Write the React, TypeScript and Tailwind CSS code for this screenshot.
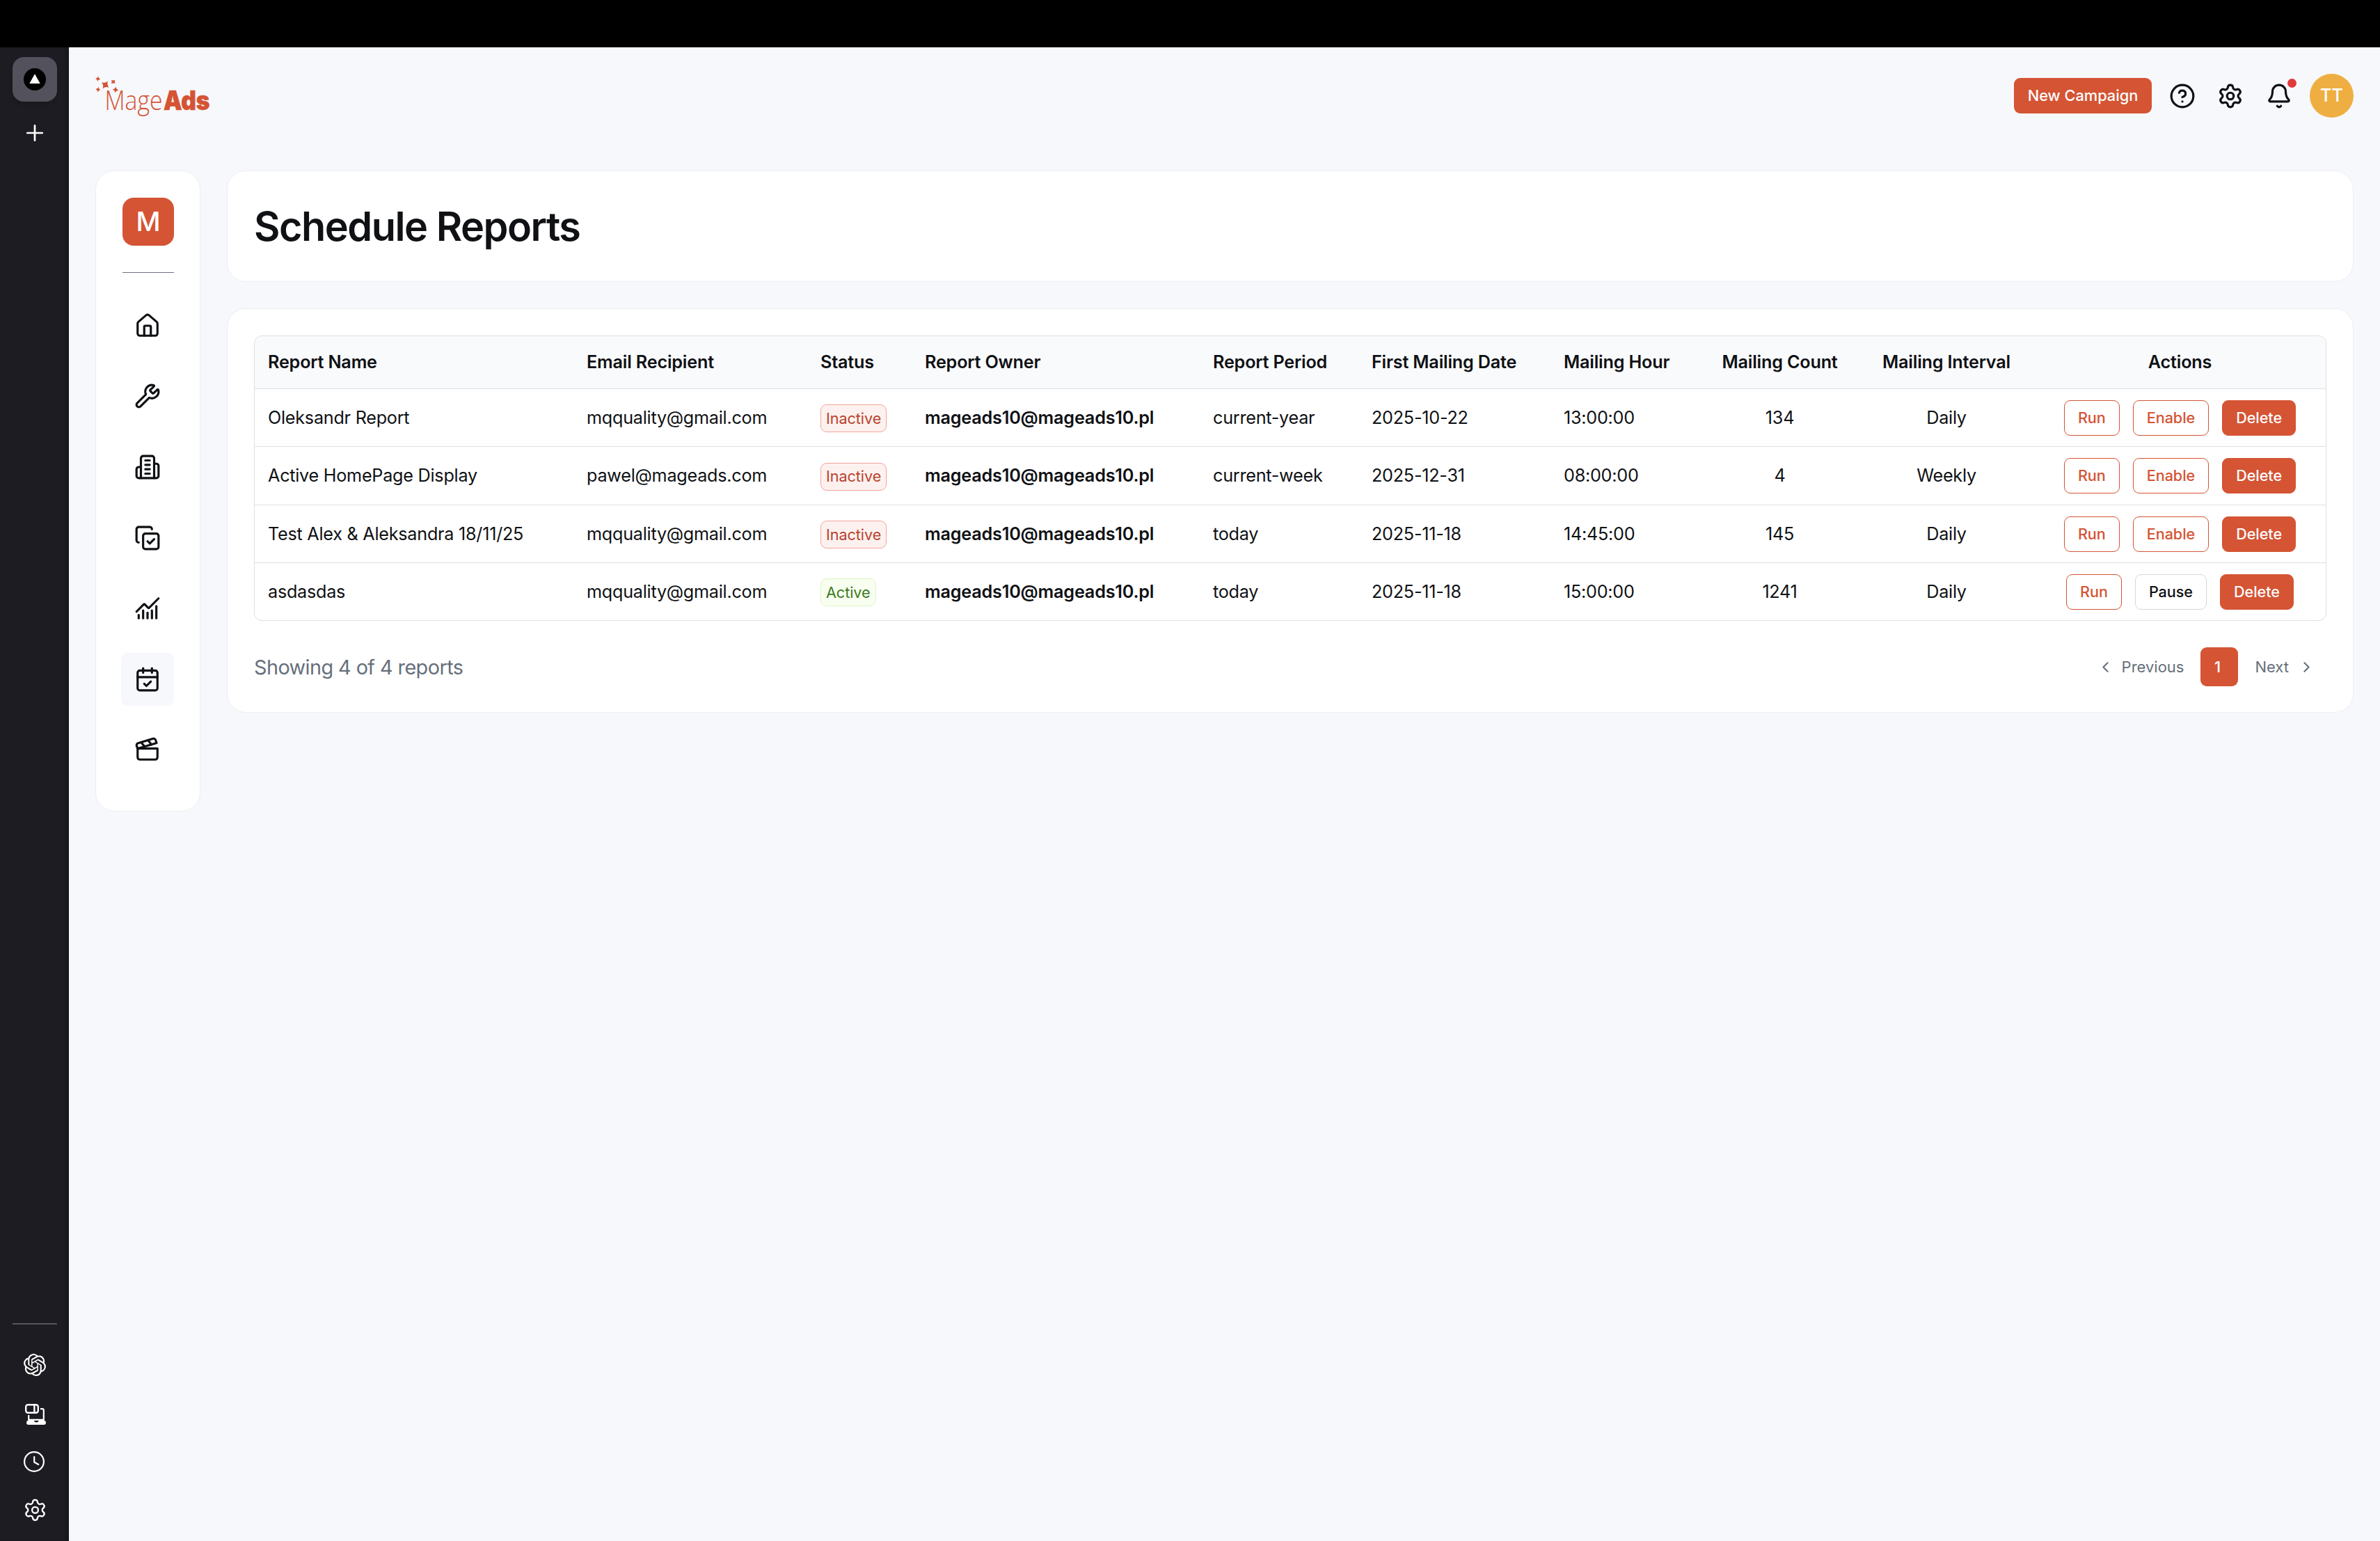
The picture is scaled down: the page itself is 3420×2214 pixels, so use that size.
import React from "react";
import {
  Bell,
  CalendarCheck,
  ChartNoAxesCombined,
  ChevronLeft,
  ChevronRight,
  CircleQuestionMark,
  Clapperboard,
  CopyCheck,
  House,
  Settings,
  Wrench,
} from "lucide-react";
import { SiOpenai } from "react-icons/si";

type Report = {
  name: string;
  email: string;
  active: boolean;
  owner: string;
  period: string;
  date: string;
  hour: string;
  count: string;
  interval: string;
  height: string;
};

const reports: Report[] = [
  { name: "Oleksandr Report", email: "mqquality@gmail.com", active: false, owner: "mageads10@mageads10.pl", period: "current-year", date: "2025-10-22", hour: "13:00:00", count: "134", interval: "Daily", height: "h-[83px] border-b" },
  { name: "Active HomePage Display", email: "pawel@mageads.com", active: false, owner: "mageads10@mageads10.pl", period: "current-week", date: "2025-12-31", hour: "08:00:00", count: "4", interval: "Weekly", height: "h-[84px] border-b" },
  { name: "Test Alex & Aleksandra 18/11/25", email: "mqquality@gmail.com", active: false, owner: "mageads10@mageads10.pl", period: "today", date: "2025-11-18", hour: "14:45:00", count: "145", interval: "Daily", height: "h-[83px] border-b" },
  { name: "asdasdas", email: "mqquality@gmail.com", active: true, owner: "mageads10@mageads10.pl", period: "today", date: "2025-11-18", hour: "15:00:00", count: "1241", interval: "Daily", height: "h-[82px]" },
];

const columns =
  "grid grid-cols-[458px_337px_149px_414px_228px_276px_226px_207px_272px_1fr] items-center";

function OfficeBuilding() {
  return (
    <svg width="38" height="38" viewBox="0 0 24 24" fill="none" stroke="currentColor" strokeWidth="2" strokeLinecap="round" strokeLinejoin="round">
      <path d="M6 22V4a2 2 0 0 1 2-2h8a2 2 0 0 1 2 2v18Z" />
      <path d="M6 12H4a2 2 0 0 0-2 2v6a2 2 0 0 0 2 2h2" />
      <path d="M18 9h2a2 2 0 0 1 2 2v9a2 2 0 0 1-2 2h-2" />
      <path d="M10 6h4M10 10h4M10 14h4M10 18h4" />
    </svg>
  );
}

function Star({ x, y, r, turn }: { x: number; y: number; r: number; turn: number }) {
  return (
    <path
      transform={`translate(${x} ${y}) rotate(${turn}) scale(${r})`}
      d="M0 -1Q.2 -.2 1 0Q.2 .2 0 1Q-.2 .2 -1 0Q-.2 -.2 0 -1Z"
    />
  );
}

function Logo() {
  return (
    <svg width="168" height="60" viewBox="136 108 168 60" fill="#d45434" className="overflow-visible">
      <Star x={140.7} y={113.3} r={3.6} turn={10} />
      <Star x={151.3} y={122} r={6.6} turn={35} />
      <Star x={162.7} y={117.5} r={3.8} turn={45} />
      <Star x={141} y={128.6} r={3.6} turn={10} />
      <Star x={166} y={129} r={4.6} turn={5} />
      <text x="150.5" y="158.3" fontSize="38" textLength="83" lengthAdjust="spacingAndGlyphs" className="font-['Open_Sans'] font-light">Mage</text>
      <text x="235" y="158.3" fontSize="37.8" textLength="66.5" lengthAdjust="spacingAndGlyphs" stroke="#d45434" strokeWidth="0.6" className="font-['Inter'] font-black">Ads</text>
    </svg>
  );
}

function BrowserRail() {
  return (
    <aside className="flex w-[99px] shrink-0 flex-col justify-between bg-[#1d1c22] pt-[14px] pb-[26px] pl-[18px] text-white shadow-[inset_-6px_0_6px_-4px_rgba(0,0,0,0.35)]">
      <div className="flex w-16 flex-col items-center gap-[33px]">
        <div className="flex size-16 items-center justify-center rounded-2xl bg-[#52515c] shadow-md">
          <svg width="32" height="32" viewBox="0 0 32 32">
            <circle cx="16" cy="16" r="16" fill="#000" />
            <path d="M16 8.3 23.7 22H8.3Z" fill="#fff" />
          </svg>
        </div>
        <svg width="24" height="24" viewBox="0 0 24 24" stroke="currentColor" strokeWidth="2.7" strokeLinecap="round" className="mr-[1px]">
          <path d="M12 1.3v21.4M1.3 12h21.4" />
        </svg>
      </div>
      <div className="flex w-16 flex-col items-center">
        <div className="mb-[42px] h-[2px] w-full bg-[#57565e]" />
        <SiOpenai size={32} />
        <svg width="30" height="30" viewBox="0 0 30 30" fill="none" stroke="currentColor" className="mt-10 ml-[3px] mr-[1px]">
          <rect x="1.2" y="1.2" width="17.6" height="11.6" rx="3" strokeWidth="2.4" />
          <path d="M13.4 1.2v11.6" strokeWidth="2.4" />
          <path d="M22 7.2h2.6q2.2 0 2.2 2.2v13.4H5.2V16" strokeWidth="2.2" />
          <path d="M5 24h8q.2 2.4 2.4 2.4h1.8q2.2 0 2.4-2.4H27a3 3 0 0 1 0 6H5a3 3 0 0 1 0-6Z" fill="currentColor" stroke="none" />
        </svg>
        <svg width="30" height="30" viewBox="0 0 30 30" fill="none" stroke="currentColor" strokeWidth="2.2" strokeLinecap="round" strokeLinejoin="round" className="mt-[38px] mr-[2px]">
          <circle cx="15" cy="15" r="13.9" />
          <path d="M15.2 8.2v7.6l6 3.2" />
        </svg>
        <Settings size={35} strokeWidth={1.6} className="mt-[37px] mb-[1px]" />
      </div>
    </aside>
  );
}

function SideNav() {
  const item = "flex h-[75.6px] w-[76px] items-center justify-center rounded-[9px]";
  return (
    <nav className="flex h-[921px] w-[151px] flex-col rounded-[27px] border border-[#eceef2] bg-white pt-[38px] pl-9 text-[#0f1114]">
      <div className="ml-[2px] flex h-[69px] w-[74px] items-center justify-center rounded-2xl bg-[#d45434] text-[38.5px] font-medium text-white">M</div>
      <div className="mt-[38px] ml-[2px] h-px w-[74px] bg-[#6b7280]" />
      <div className="mt-[38px] flex flex-col gap-[26px]">
        <div className={item}><House size={38} /></div>
        <div className={item}><Wrench size={38} /></div>
        <div className={item}><OfficeBuilding /></div>
        <div className={item}><CopyCheck size={38} /></div>
        <div className={item}><ChartNoAxesCombined size={38} /></div>
        <div className={`${item} bg-[#f7f8fc]`}><CalendarCheck size={38} /></div>
        <div className={item}><Clapperboard size={38} /></div>
      </div>
    </nav>
  );
}

function TopBar() {
  return (
    <header className="flex h-[139px] items-center justify-between pr-[38px]">
      <Logo />
      <div className="flex items-center text-[#0f1114]">
        <button className="h-[51px] w-[198px] rounded-[9px] bg-[#d45434] text-[21.8px] font-medium text-white">New Campaign</button>
        <CircleQuestionMark size={38} className="ml-[25px]" />
        <Settings size={38} className="ml-[31px]" />
        <div className="relative ml-8">
          <Bell size={38} />
          <span className="absolute -top-[6px] right-[-6px] size-[13px] rounded-full bg-[#e03a3a]" />
        </div>
        <div className="ml-[25px] flex size-[63px] items-center justify-center rounded-full bg-[#efae41] text-[25.2px] font-medium text-white">TT</div>
      </div>
    </header>
  );
}

function ReportRow({ r }: { r: Report }) {
  const button = "h-[51px] rounded-[9px] border px-[19px] text-[21.6px] font-medium";
  return (
    <div className={`${columns} ${r.height} border-[#dcdfe3]`}>
      <div className="pt-[1px] pl-[19px]">{r.name}</div>
      <div className="pt-[1px] pl-[19px]">{r.email}</div>
      <div className="flex pl-[18px]">
        <span
          className={
            r.active
              ? "mt-[2px] flex h-10 items-center rounded-[9px] border border-[#ddf5c4] bg-[#f8fff0] px-[7px] text-[21.6px] tracking-[-0.05px] text-[#3b7a1e]"
              : "mt-[2px] flex h-10 items-center rounded-[9px] border border-[#f2a59c] bg-[#fdf1f0] px-[7px] text-[21.6px] tracking-[-0.05px] text-[#b8432c]"
          }
        >
          {r.active ? "Active" : "Inactive"}
        </span>
      </div>
      <div className="pt-[1px] pl-[19px] font-semibold tracking-[-0.19px]">{r.owner}</div>
      <div className="pt-[1px] pl-[19px]">{r.period}</div>
      <div className="pt-[1px] pl-[19px]">{r.date}</div>
      <div className="pt-[1px] pl-[19px]">{r.hour}</div>
      <div className="pt-[1px] text-center">{r.count}</div>
      <div className="pt-[1px] text-center">{r.interval}</div>
      <div className="flex justify-center gap-[19px] pr-[10px] tracking-[-0.05px]">
        <button className={`${button} border-[#d45434] text-[#d45434]`}>Run</button>
        <button className={`${button} ${r.active ? "border-[#d5d8dd]" : "border-[#d45434] text-[#d45434]"}`}>
          {r.active ? "Pause" : "Enable"}
        </button>
        <button className={`${button} border-[#d45434] bg-[#d45434] text-white`}>Delete</button>
      </div>
    </div>
  );
}

export default function App() {
  return (
    <div className="flex h-[2214px] w-[3420px] flex-col overflow-hidden bg-black pt-[68px] font-['Inter',sans-serif] text-[#0f1114]">
      <div className="flex flex-1 bg-[#f7f8fc]">
        <BrowserRail />
        <div className="flex-1 pl-[37px]">
          <TopBar />
          <div className="mt-[38px] flex gap-[38px] pl-[1px] pr-[38px]">
            <SideNav />
            <main className="flex flex-1 flex-col gap-[38px]">
              <section className="flex h-[160px] items-center rounded-[27px] border border-[#eceef2] bg-white pl-[38px]">
                <h1 className="text-[57.6px] font-semibold tracking-[-1.5px]">Schedule Reports</h1>
              </section>
              <section className="rounded-[27px] border border-[#eceef2] bg-white p-[38px] pb-[37px]">
                <div className="overflow-hidden rounded-[11px] border border-[#dcdfe3] text-[25.2px] tracking-[-0.25px]">
                  <div className={`${columns} h-[76px] border-b border-[#dcdfe3] bg-[#f9fafc] font-semibold tracking-[-0.19px]`}>
                    <div className="pl-[19px]">Report Name</div>
                    <div className="pl-[19px]">Email Recipient</div>
                    <div className="pl-[18px]">Status</div>
                    <div className="pl-[19px]">Report Owner</div>
                    <div className="pl-[19px]">Report Period</div>
                    <div className="pl-[19px]">First Mailing Date</div>
                    <div className="pl-[19px]">Mailing Hour</div>
                    <div className="text-center">Mailing Count</div>
                    <div className="text-center">Mailing Interval</div>
                    <div className="pr-[10px] text-center">Actions</div>
                  </div>
                  {reports.map((r) => (
                    <ReportRow key={r.name} r={r} />
                  ))}
                </div>
                <div className="mt-[38px] flex h-14 items-center justify-between text-[#666f7b]">
                  <p className="pt-[1px] text-[28.8px] tracking-[-0.56px]">Showing 4 of 4 reports</p>
                  <div className="flex items-center pr-4 text-[22px]">
                    <ChevronLeft size={25} className="mr-[11px]" />
                    <span>Previous</span>
                    <button className="mx-6 h-14 w-[54px] rounded-[9px] bg-[#d45434] pr-[6px] font-medium text-white">1</button>
                    <span>Next</span>
                    <ChevronRight size={25} className="ml-[13px]" />
                  </div>
                </div>
              </section>
            </main>
          </div>
        </div>
      </div>
    </div>
  );
}
